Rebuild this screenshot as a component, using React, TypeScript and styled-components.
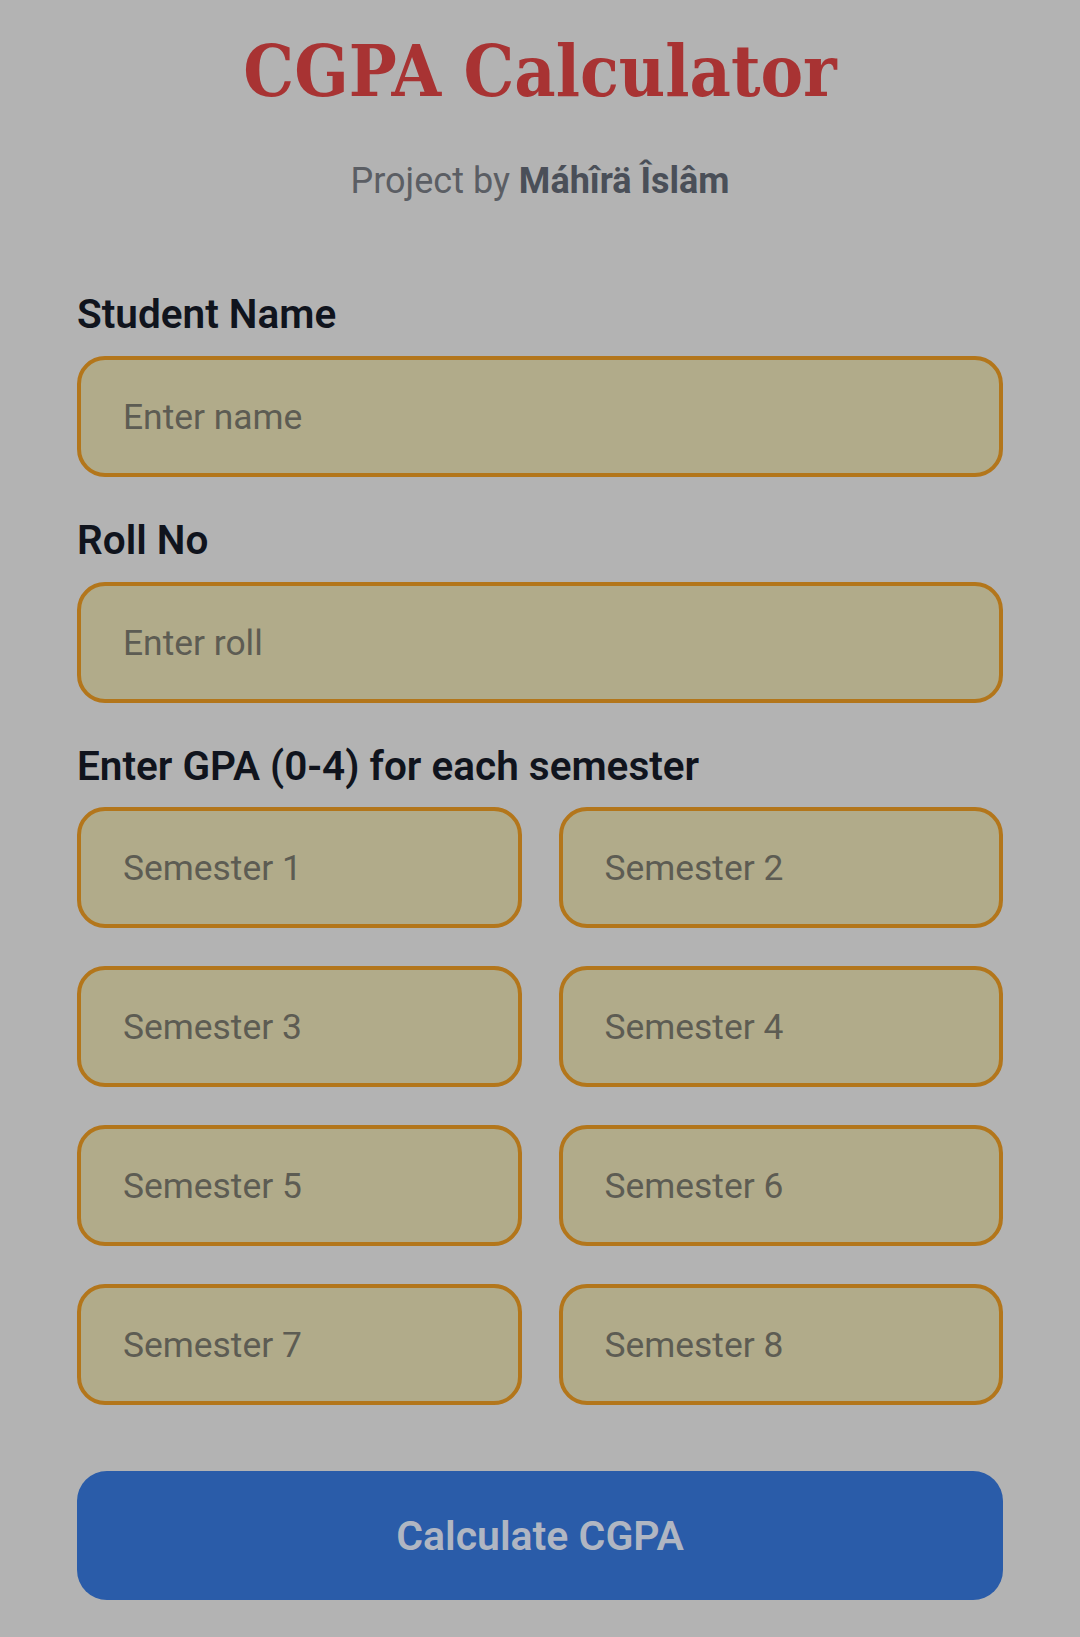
import React from "react";
import styled, { createGlobalStyle } from "styled-components";

const GlobalStyle = createGlobalStyle`
  html, body {
    margin: 0;
    padding: 0;
    background: #b3b3b3;
  }
  body {
    font-family: Roboto, "Noto Sans", Arial, sans-serif;
  }
  * { box-sizing: border-box; }
`;

const Page = styled.main`
  min-height: 1637px;
  padding: 21px 77px 0;
  background: #b3b3b3;
  display: flex;
  flex-direction: column;
`;

const Title = styled.h1`
  margin: 0;
  height: 100px;
  line-height: 100px;
  text-align: center;
  font-family: "DejaVu Serif Condensed", "DejaVu Serif", "Liberation Serif", serif;
  font-stretch: condensed;
  font-weight: 700;
  font-size: 71px;
  color: #a83333;
`;

const Subtitle = styled.p`
  margin: 35px 0 0;
  height: 50px;
  line-height: 50px;
  text-align: center;
  font-size: 36px;
  color: #5b5e64;
  strong {
    font-weight: 700;
    color: #4a4f58;
  }
`;

const Label = styled.label<{ $gap: number }>`
  display: block;
  margin-top: ${(p) => p.$gap}px;
  height: 50px;
  line-height: 50px;
  font-size: 40.5px;
  font-weight: 600;
  color: #10141d;
`;

const Field = styled.input<{ $gap?: number }>`
  display: block;
  width: 100%;
  height: 121px;
  margin-top: ${(p) => p.$gap ?? 0}px;
  padding: 0 42px;
  border: 4px solid #b3761b;
  border-radius: 28px;
  background: #b1ab8a;
  font-family: Roboto, "Noto Sans", Arial, sans-serif;
  font-size: 35.4px;
  color: #222;
  outline: none;
  &::placeholder {
    color: #5d5c53;
  }
`;

const Grid = styled.div`
  margin-top: 16px;
  display: grid;
  grid-template-columns: 1fr 1fr;
  column-gap: 37px;
  row-gap: 38px;
`;

const Button = styled.button`
  margin-top: 66px;
  width: 100%;
  height: 129px;
  border: none;
  border-radius: 30px;
  background: #2a5ca9;
  color: #b0b6c2;
  font-family: Roboto, "Noto Sans", Arial, sans-serif;
  font-size: 41px;
  font-weight: 600;
  cursor: pointer;
`;

export default function App() {
  const semesters = [1, 2, 3, 4, 5, 6, 7, 8];
  return (
    <>
      <GlobalStyle />
      <Page>
        <Title>CGPA Calculator</Title>
        <Subtitle>
          Project by <strong>Máhîrä Îslâm</strong>
        </Subtitle>
        <Label $gap={83}>Student Name</Label>
        <Field $gap={17} placeholder="Enter name" />
        <Label $gap={38}>Roll No</Label>
        <Field $gap={17} placeholder="Enter roll" />
        <Label $gap={38}>Enter GPA (0-4) for each semester</Label>
        <Grid>
          {semesters.map((s) => (
            <Field key={s} placeholder={`Semester ${s}`} />
          ))}
        </Grid>
        <Button>Calculate CGPA</Button>
      </Page>
    </>
  );
}
